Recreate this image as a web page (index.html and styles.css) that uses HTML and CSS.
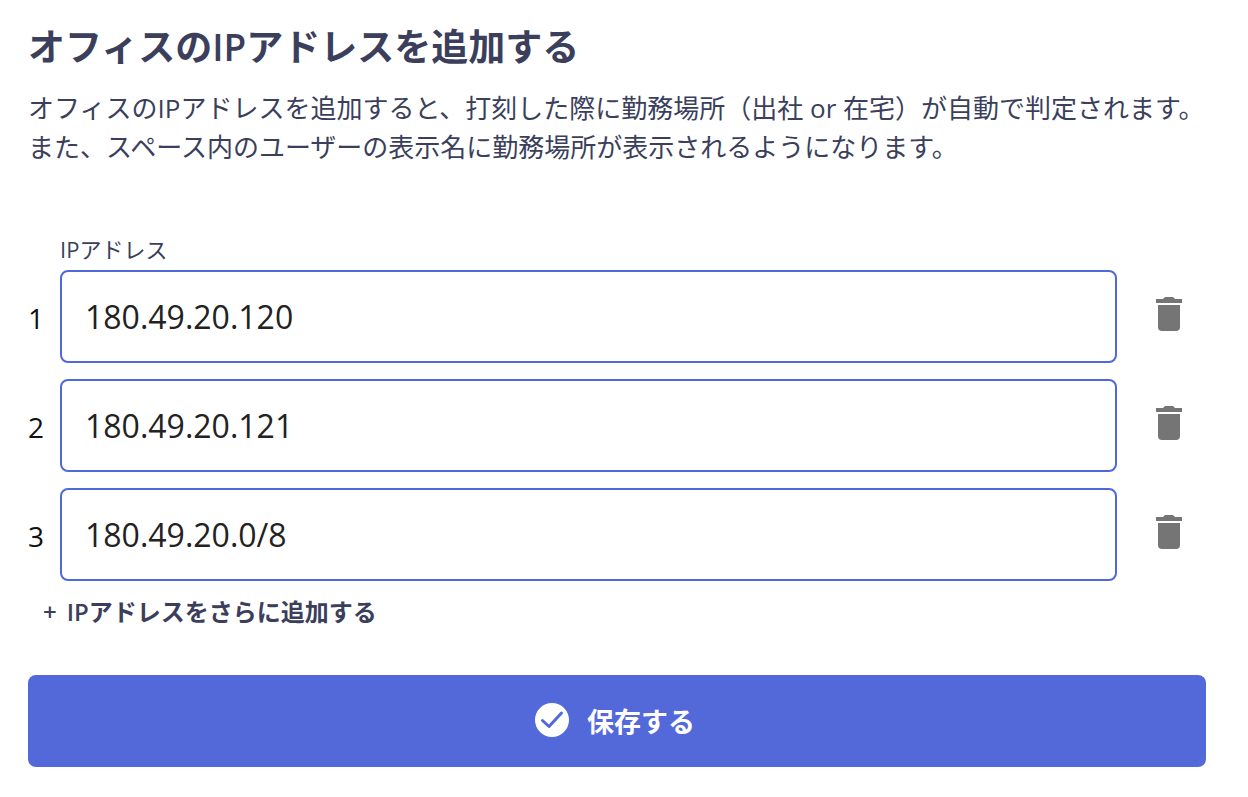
FILE: index.html
```html
<!DOCTYPE html>
<html lang="ja">
  <head>
    <meta charset="UTF-8" />
    <meta name="viewport" content="width=device-width, initial-scale=1.0" />
    <title>オフィスのIPアドレスを追加する</title>
    <link rel="stylesheet" href="styles.css">
  </head>
  <body>
    <!-- trash icon shared by every row -->
    <svg class="sprite" aria-hidden="true">
      <symbol id="trash" viewBox="0 0 26 34">
        <path d="M0 2h7l2-2h8l2 2h7v4H0z" />
        <path d="M2 8h22v22a4 4 0 0 1-4 4H6a4 4 0 0 1-4-4z" />
      </symbol>
    </svg>
    <main class="page">
      <h1 class="title">オフィスのIPアドレスを追加する</h1>
      <p class="description">
        オフィスのIPアドレスを追加すると、打刻した際に勤務場所（出社 or 在宅）が自動で判定されます。<br />また、スペース内のユーザーの表示名に勤務場所が表示されるようになります。
      </p>
      <form class="ip-form">
        <label class="ip-label" for="ip1">IPアドレス</label>
        <div class="ip-list">
          <div class="ip-row">
            <label class="ip-number" for="ip1">1</label>
            <input class="ip-input" id="ip1" type="text" value="180.49.20.120" />
            <button class="delete" type="button" aria-label="削除"><svg class="trash"><use href="#trash" /></svg></button>
          </div>
          <div class="ip-row">
            <label class="ip-number" for="ip2">2</label>
            <input class="ip-input" id="ip2" type="text" value="180.49.20.121" />
            <button class="delete" type="button" aria-label="削除"><svg class="trash"><use href="#trash" /></svg></button>
          </div>
          <div class="ip-row">
            <label class="ip-number" for="ip3">3</label>
            <input class="ip-input" id="ip3" type="text" value="180.49.20.0/8" />
            <button class="delete" type="button" aria-label="削除"><svg class="trash"><use href="#trash" /></svg></button>
          </div>
        </div>
        <button class="add" type="button"><span>+</span> <span>IPアドレスをさらに追加する</span></button>
        <button class="save" type="submit">
          <svg class="check" viewBox="0 0 34 34" aria-hidden="true">
            <circle cx="17" cy="17" r="17" />
            <path d="M7.500 17.500l6.500 6 12.500-13.500" />
          </svg>
          保存する
        </button>
      </form>
    </main>
  </body>
</html>
```

FILE: styles.css
```css
* {
  box-sizing: border-box;
}
body {
  margin: 0;
  background-color: #fff;
  color: #3b3f5c;
  font-family: "Open Sans", "Noto Sans CJK JP", sans-serif;
}
button,
input {
  font-family: inherit;
}
.sprite {
  display: none;
}
.page {
  padding: 20px 42px 30px 28px;
}
.title {
  margin: 0;
  font-size: 37px;
  line-height: 54px;
  font-weight: 600;
}
.description {
  margin: 15px -28px 0 0;
  font-size: 26px;
  line-height: 39px;
}
.ip-form {
  display: flex;
  flex-direction: column;
  margin-top: 64px;
}
.ip-label {
  margin-left: 32px;
  padding-bottom: 3px;
  font-size: 22px;
  line-height: 36px;
}
.ip-list {
  display: flex;
  flex-direction: column;
  gap: 16px;
}
.ip-row {
  display: flex;
  align-items: center;
}
.ip-number {
  width: 32px;
  padding-top: 2px;
  color: #111;
  font-size: 28px;
  line-height: 40px;
}
.ip-input {
  flex: 1;
  min-width: 0;
  height: 93px;
  padding: 0 23px;
  border: 2px solid #5068d9;
  border-radius: 8px;
  background-color: #fff;
  color: #222;
  font-size: 32px;
}
.delete {
  display: flex;
  justify-content: center;
  width: 73px;
  margin-left: 16px;
  padding: 0 2px 6px 0;
  border: 0;
  background: none;
}
.trash {
  width: 26px;
  height: 34px;
  fill: #757575;
}
.add {
  display: flex;
  gap: 10px;
  align-self: flex-start;
  margin-top: 13px;
  padding: 0 15px;
  border: 0;
  background: none;
  color: #3b3f5c;
  font-size: 24px;
  line-height: 36px;
  font-weight: 600;
}
.save {
  display: flex;
  align-items: center;
  justify-content: center;
  gap: 18px;
  height: 92px;
  margin-top: 45px;
  padding: 0 10px 2px 6px;
  border: 0;
  border-radius: 8px;
  background-color: #5469d9;
  color: #fff;
  font-size: 27px;
  font-weight: 700;
}
.check {
  width: 34px;
  height: 34px;
  fill: #fff;
}
.check path {
  fill: none;
  stroke: #5469d9;
  stroke-width: 3;
  stroke-linecap: round;
  stroke-linejoin: round;
}
```
